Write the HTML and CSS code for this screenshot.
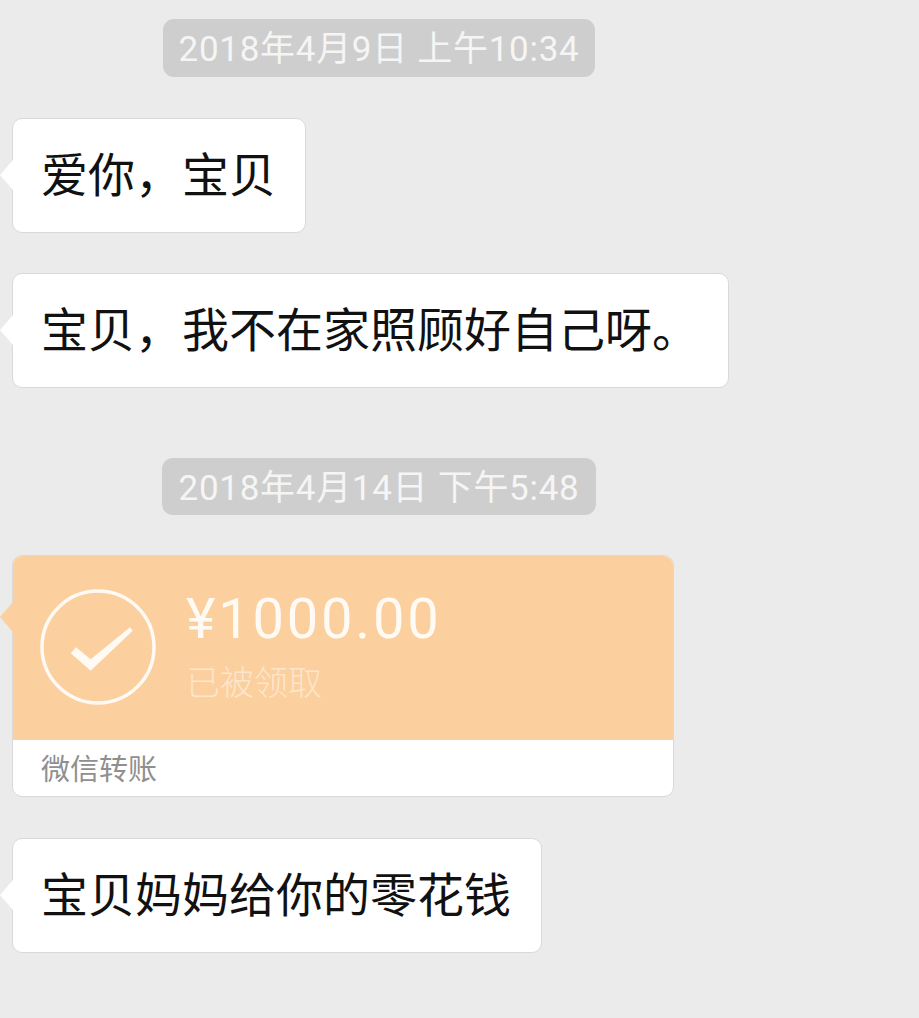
FILE: index.html
```html
<!DOCTYPE html>
<html lang="zh-CN">
<head>
    <meta charset="UTF-8">
    <meta name="viewport" content="width=device-width, initial-scale=1.0">
    <title>微信聊天记录</title>
    <link rel="stylesheet" href="styles.css">
</head>
<body>
    <div class="chat">
        <div class="time">2018年4月9日 上午10:34</div>
        <div class="bubble bubble-first">爱你，宝贝</div>
        <div class="bubble bubble-second">宝贝，我不在家照顾好自己呀。</div>

        <div class="time time-second">2018年4月14日 下午5:48</div>
        <div class="transfer">
            <div class="transfer-main">
                <svg class="transfer-icon" width="116" height="116" viewBox="0 0 116 116">
                    <circle cx="58" cy="58" r="56" fill="none" stroke="#fffaf3" stroke-width="3.5"/>
                    <polygon points="30.7,64.3 36,58.3 50.7,70.3 90,38.3 92.7,41.7 50.7,81.7" fill="#fffaf3"/>
                </svg>
                <div class="transfer-info">
                    <div class="amount">¥1000.00</div>
                    <div class="status">已被领取</div>
                </div>
            </div>
            <div class="transfer-foot">微信转账</div>
        </div>
        <div class="bubble bubble-last">宝贝妈妈给你的零花钱</div>
    </div>
</body>
</html>
```

FILE: styles.css
```css
body {
    font-family: "Noto Sans CJK SC", "Liberation Sans", sans-serif;
    margin: 0;
    padding: 0;
    background-color: #ebebeb;
}
.chat {
    width: 734px;
    padding: 19px 0 0 12px;
    display: flex;
    flex-direction: column;
    align-items: flex-start;
}
.time {
    align-self: center;
    height: 58px;
    line-height: 62px;
    padding: 0 16px;
    font-family: Roboto, "Noto Sans CJK SC", sans-serif;
    font-size: 35px;
    font-weight: 400;
    letter-spacing: 0.7px;
    color: #f5f5f5;
    background-color: #cecece;
    border-radius: 11px;
    white-space: nowrap;
}
.time-second {
    height: 57px;
    margin-top: 70px;
    padding: 0 17px;
}
.bubble, .transfer {
    position: relative;
    box-sizing: border-box;
    background: #fff;
    border: 1px solid #d9d9d9;
    border-radius: 10px;
}
.bubble {
    height: 115px;
    line-height: 105px;
    padding: 0 20px 0 28px;
    font-size: 47px;
    color: #111;
    white-space: nowrap;
}
/* little tail on the left side of each message */
.bubble::before, .transfer::before {
    content: "";
    position: absolute;
    left: -13px;
    top: 41px;
    width: 13px;
    height: 30px;
    background: #fff;
    clip-path: polygon(100% 0, 0 50%, 100% 100%);
}
.bubble-first {
    margin-top: 41px;
    width: 294px;
}
.bubble-second {
    margin-top: 40px;
    width: 717px;
}
.bubble-last {
    margin-top: 41px;
    width: 530px;
}
.transfer {
    margin-top: 40px;
    width: 662px;
    height: 242px;
}
.transfer::before {
    top: 46px;
    background: #fccf9e;
}
.transfer-main {
    display: flex;
    align-items: flex-start;
    height: 184px;
    padding: 33px 0 0 27px;
    box-sizing: border-box;
    background: #fccf9e;
    border-radius: 9px 9px 0 0;
}
.transfer-icon {
    flex: none;
}
.transfer-info {
    margin-left: 30px;
    color: #fffaf3;
}
.amount {
    font-family: Roboto, "Liberation Sans", sans-serif;
    font-size: 56px;
    font-weight: 400;
    letter-spacing: 2.8px;
    line-height: 62px;
    margin-top: -1px;
    white-space: nowrap;
}
.status {
    font-size: 34px;
    font-weight: 300;
    line-height: 44px;
    margin-top: 9px;
    color: #fde6cb;
}
.transfer-foot {
    padding-left: 28px;
    height: 56px;
    line-height: 54px;
    font-size: 29px;
    color: #8f8f8f;
}
```
